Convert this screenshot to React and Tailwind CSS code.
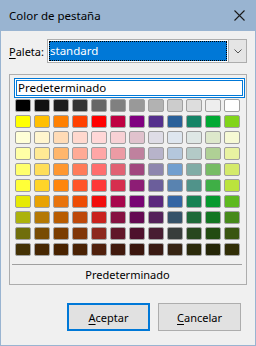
import React from 'react';

const rows = [
    ['#000000', '#111111', '#1c1c1c', '#333333', '#666666', '#808080', '#999999', '#b2b2b2', '#cccccc', '#dddddd', '#eeeeee', '#ffffff'],
    ['#ffff00', '#ffbf00', '#ff8000', '#ff4000', '#ff0000', '#bf0041', '#800080', '#55308d', '#2a6099', '#158466', '#00a933', '#81d41a'],
    ['#ffffd7', '#fff5ce', '#ffdbb6', '#ffd8ce', '#ffd7d7', '#f7d1d5', '#e0c2cd', '#dedce6', '#dee6ef', '#dee7e5', '#dde8cb', '#f6f9d4'],
    ['#ffffa6', '#ffe994', '#ffb66c', '#ffaa95', '#ffa6a6', '#ec9ba4', '#bf819e', '#b7b3ca', '#b4c7dc', '#b3cac7', '#afd095', '#e8f2a1'],
    ['#ffff6d', '#ffde59', '#ff972f', '#ff7b59', '#ff6d6d', '#e16173', '#a1467e', '#8e86ae', '#729fcf', '#81aca6', '#77bc65', '#d4ea6b'],
    ['#ffff38', '#ffd428', '#ff860d', '#ff5429', '#ff3838', '#d62e4e', '#8d1d75', '#6b5e9b', '#5983b0', '#50938a', '#3faf46', '#bbe33d'],
    ['#e6e905', '#e8a202', '#e8730c', '#ed4c05', '#f10d0c', '#a7074b', '#780373', '#5b277d', '#3465a4', '#168253', '#069a2e', '#5eb91e'],
    ['#acb20c', '#b47804', '#b85c00', '#be480a', '#c9211e', '#861141', '#650953', '#55215b', '#355269', '#1e6a39', '#127622', '#468a1a'],
    ['#706e0c', '#784b04', '#7b3d00', '#813709', '#8d281e', '#611729', '#4e102d', '#481d32', '#383d3c', '#28471f', '#224b12', '#395511'],
    ['#443205', '#472702', '#492300', '#4b2204', '#50200c', '#41190d', '#3b160e', '#3a1a13', '#362413', '#2b2a0a', '#252607', '#312e06'],
];

const App = () => {
    return (
        <div className="w-[256px] h-[346px] flex flex-col bg-[#f0f0f0] border-x border-b border-[#99b4d1] font-['Noto_Sans',sans-serif] text-[11px] text-black leading-none">
            {/* Title bar */}
            <div className="h-[31px] shrink-0 bg-[#99b4d1] flex items-center justify-between pl-[8px] pr-[9px] text-[11.5px]">
                <span>Color de pestaña</span>
                <svg width="11" height="11" viewBox="0 0 11 11" className="mr-[1px]">
                    <path d="M0.5 0.5 L10.5 10.5 M10.5 0.5 L0.5 10.5" stroke="#1a1a1a" strokeWidth="1.1" />
                </svg>
            </div>

            <div className="flex-1 flex flex-col px-[8px]">
                {/* Palette selector */}
                <div className="mt-[8px] h-[24px] flex items-center">
                    <span className="w-[38px]"><span className="underline underline-offset-2">P</span>aleta:</span>
                    <div className="flex-1 h-full flex border border-[#adadad] bg-white">
                        <div className="flex-1 m-[1px] bg-[#0078d7] text-white text-[11.5px] flex items-center pl-[1px] outline-1 outline-dotted outline-black -outline-offset-1">
                            standard
                        </div>
                        <div className="w-[18px] flex items-center justify-center bg-[#e5e5e5] border-l border-[#adadad]">
                            <svg width="8" height="5" viewBox="0 0 8 5">
                                <path d="M0.5 0.5 L4 4 L7.5 0.5" stroke="#555" strokeWidth="1" fill="none" />
                            </svg>
                        </div>
                    </div>
                </div>

                {/* Palette group */}
                <div className="mt-[11px] h-[211px] flex flex-col border border-[#adadad] pt-[3px] pl-[4px] pr-[1px]">
                    <div className="h-[20px] flex items-center bg-white border border-[#0078d7] shadow-[inset_0_0_0_1px_white,inset_0_0_0_2px_#0078d7] pl-[3px] text-[11.5px]">
                        Predeterminado
                    </div>
                    <div className="mt-[1px] ml-[1px] grid grid-cols-[repeat(12,16px)] auto-rows-[13px] gap-x-[3px] gap-y-[3px]">
                        {rows.map((row, r) =>
                            row.map((c, i) => (
                                <div
                                    key={`${r}-${i}`}
                                    className="border border-[#a0a0a0] rounded-[2px]"
                                    style={{ backgroundColor: c }}
                                />
                            ))
                        )}
                    </div>
                    <div className="mt-[8px] ml-[-2px] mr-[3px] h-px bg-[#a0a0a0]" />
                    <div className="h-[19px] flex items-center justify-center pr-[4px]">Predeterminado</div>
                </div>

                {/* Buttons */}
                <div className="mt-[18px] flex justify-end gap-[8px] pr-[6px]">
                    <button className="w-[83px] h-[28px] bg-[#e1e1e1] border-2 border-[#0078d7] flex items-center justify-center">
                        <span><span className="underline underline-offset-2">A</span>ceptar</span>
                    </button>
                    <button className="w-[83px] h-[28px] bg-[#e1e1e1] border border-[#adadad] flex items-center justify-center">
                        <span><span className="underline underline-offset-2">C</span>ancelar</span>
                    </button>
                </div>
            </div>
        </div>
    );
};

export default App;
